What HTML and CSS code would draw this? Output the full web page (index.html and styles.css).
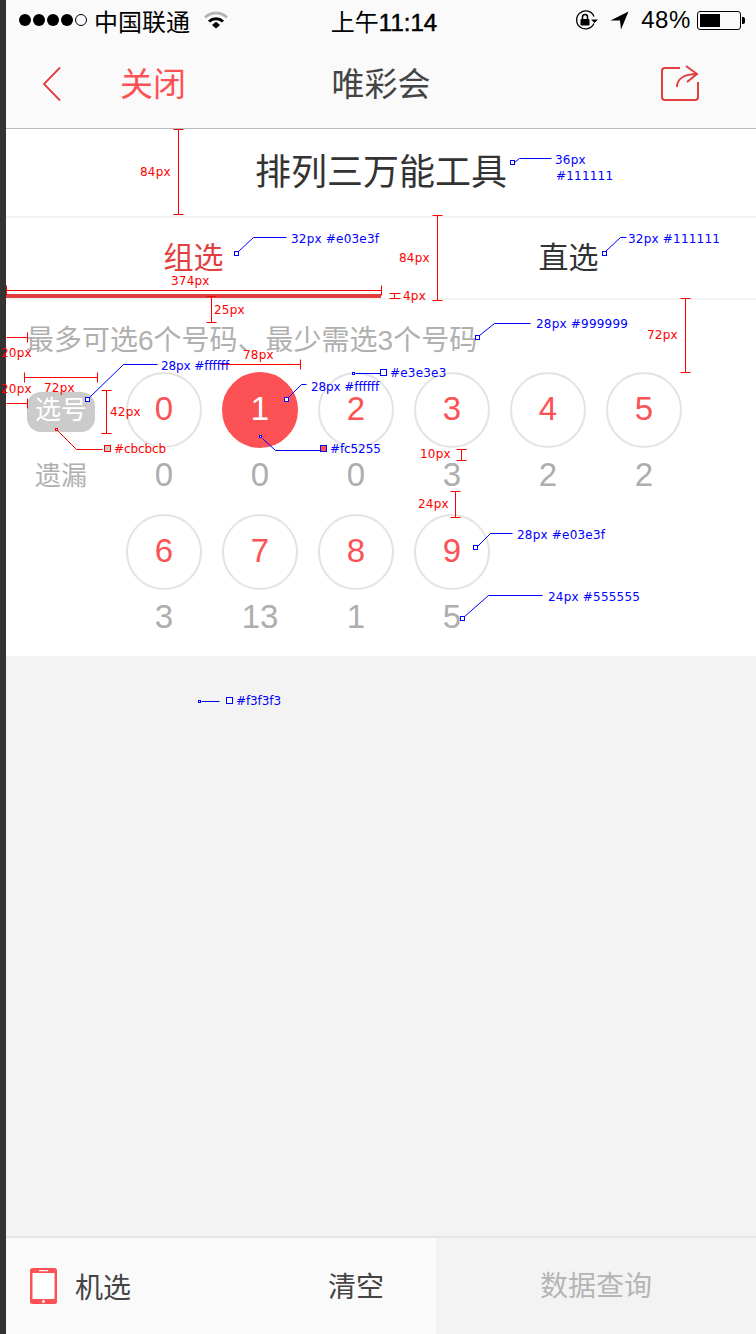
FILE: index.html
```html
<!DOCTYPE html>
<html lang="zh-CN">
<head>
    <meta charset="UTF-8">
    <meta name="viewport" content="width=device-width, initial-scale=1.0">
    <title>唯彩会</title>
    <link rel="stylesheet" href="styles.css">
</head>
<body>
    <div class="edge"></div>
    <div class="page">
        <div class="status-bar">
            <div class="status-left">
                <span class="signal">
                    <i class="dot"></i><i class="dot"></i><i class="dot"></i><i class="dot"></i><i class="dot empty"></i>
                </span>
                <span class="carrier">中国联通</span>
                <svg class="wifi" width="24" height="18" viewBox="0 0 24 18">
                    <path d="M1 6.500a16 16 0 0 1 22 0" fill="none" stroke="#b4b4b4" stroke-width="3"/>
                    <path d="M5 10.500a10.500 10.500 0 0 1 14 0" fill="none" stroke="#000" stroke-width="3"/>
                    <path d="M8 14l4-3.200 4 3.200-4 3.500z" fill="#000"/>
                </svg>
            </div>
            <div class="status-time">上午<span class="clock">11:14</span></div>
            <div class="status-right">
                <svg class="lock" width="24" height="20" viewBox="0 0 24 20">
                    <path d="M19 6.500A9 9 0 1 0 18.900 13.500" fill="none" stroke="#000" stroke-width="1.300"/>
                    <path d="M16 9.500h7l-3.500 3.500z" fill="#000"/>
                    <rect x="5.500" y="9" width="9" height="6.500" rx="1" fill="#000"/>
                    <path d="M7.500 9V7a2.500 2.500 0 0 1 5 0v2" fill="none" stroke="#000" stroke-width="1.500"/>
                </svg>
                <svg class="arrow" width="19" height="19" viewBox="0 0 19 19">
                    <path d="M0.500 9.500L18.500 0.500L11 18.500L10 9.500z" fill="#000"/>
                </svg>
                <span class="percent">48%</span>
                <span class="battery"><i class="battery-fill"></i></span>
                <i class="battery-nub"></i>
            </div>
        </div>

        <nav class="nav-bar">
            <div class="nav-left">
                <svg class="back" width="20" height="36" viewBox="0 0 20 36">
                    <path d="M18 1.500L2 18l16 16.500" fill="none" stroke="#e03e3f" stroke-width="1.800"/>
                </svg>
                <span class="close">关闭</span>
            </div>
            <div class="nav-title">唯彩会</div>
            <svg class="share" width="38" height="37" viewBox="0 0 38 37">
                <path d="M19 3H4a3 3 0 0 0-3 3v26a3 3 0 0 0 3 3h30a3 3 0 0 0 3-3V17" fill="none" stroke="#e03e3f" stroke-width="2"/>
                <path d="M16 22c0-8 7-13 20-13M25 1l11 8-10 8" fill="none" stroke="#e03e3f" stroke-width="2"/>
            </svg>
        </nav>

        <header class="tool-title">排列三万能工具</header>

        <div class="tabs">
            <div class="tab active">组选</div>
            <div class="tab">直选</div>
        </div>

        <section class="picker">
            <p class="hint">最多可选6个号码、最少需选3个号码</p>
            <div class="pick-area">
                <div class="pick-labels">
                    <span class="label-badge">选号</span>
                    <span class="label-miss">遗漏</span>
                </div>
                <div class="balls">
                    <div class="cell"><span class="ball">0</span><span class="count">0</span></div>
                    <div class="cell"><span class="ball selected">1</span><span class="count">0</span></div>
                    <div class="cell"><span class="ball">2</span><span class="count">0</span></div>
                    <div class="cell"><span class="ball">3</span><span class="count">3</span></div>
                    <div class="cell"><span class="ball">4</span><span class="count">2</span></div>
                    <div class="cell"><span class="ball">5</span><span class="count">2</span></div>
                    <div class="cell"><span class="ball">6</span><span class="count">3</span></div>
                    <div class="cell"><span class="ball">7</span><span class="count">13</span></div>
                    <div class="cell"><span class="ball">8</span><span class="count">1</span></div>
                    <div class="cell"><span class="ball">9</span><span class="count">5</span></div>
                </div>
            </div>
        </section>

        <div class="filler"></div>

        <footer class="bottom-bar">
            <div class="bottom-left">
                <div class="random">
                    <svg class="phone" width="27" height="36" viewBox="0 0 27 36">
                        <rect width="27" height="36" rx="2.500" fill="#fc5255"/>
                        <rect x="2.500" y="5" width="22" height="26" fill="#fff"/>
                        <rect x="9" y="2" width="9" height="1.200" fill="#fff"/>
                        <circle cx="13.500" cy="33.500" r="1.400" fill="#fff"/>
                    </svg>
                    <span>机选</span>
                </div>
                <span class="clear">清空</span>
            </div>
            <div class="bottom-right">数据查询</div>
        </footer>

        <!-- spec marks drawn on top of the design -->
        <svg class="marks" width="756" height="1334" viewBox="0 0 756 1334">
            <g class="red-lines">
                <path d="M178 129v85M173 129h10M173 214h10"/>
                <path d="M437 215v85M432 215h10M432 300h10"/>
                <path d="M6 290H381M6 285v10M381 285v10"/>
                <path d="M394 293v5M389 293h11M389 298h11"/>
                <path d="M211 296v26M206 296h10M206 322h10"/>
                <path d="M685 298v74M680 298h10M680 372h10"/>
                <path d="M6 337H27M27 332v10"/>
                <path d="M6 403H27M27 398v10"/>
                <path d="M24 377H97M24 372v10M97 372v10"/>
                <path d="M220 364H300M300 359v10"/>
                <path d="M106 390v43M101 390h10M101 433h10"/>
                <path d="M461 449v11M456 449h10M456 460h10"/>
                <path d="M455 491v26M450 491h10M450 517h10"/>
                <path d="M56 429l20 20h26"/>
            </g>
            <g class="red-text">
                <text x="140" y="176">84px</text>
                <text x="399" y="262">84px</text>
                <text x="171" y="285">374px</text>
                <text x="403" y="300">4px</text>
                <text x="214" y="314">25px</text>
                <text x="647" y="339">72px</text>
                <text x="1" y="357">20px</text>
                <text x="243" y="359">78px</text>
                <text x="1" y="393">20px</text>
                <text x="44" y="392">72px</text>
                <text x="110" y="416">42px</text>
                <text x="420" y="458">10px</text>
                <text x="418" y="508">24px</text>
                <text class="tight" x="114" y="453">#cbcbcb</text>
            </g>
            <g class="blue-lines">
                <path d="M514 162l5-4h32"/>
                <path d="M238 251l15-14h33"/>
                <path d="M605 251l15-14h6"/>
                <path d="M479 335l15-12h36"/>
                <path d="M89 397l34-33h34"/>
                <path d="M288 397l13-13h5"/>
                <path d="M355 373h26"/>
                <path d="M262 438l13 12h46"/>
                <path d="M477 546l13-13h22"/>
                <path d="M463 617l25-22h54"/>
                <path d="M201 701h18"/>
            </g>
            <g class="blue-boxes">
                <rect x="510.500" y="160.500" width="4" height="4"/>
                <rect x="234.500" y="251.500" width="4" height="4"/>
                <rect x="602.500" y="251.500" width="4" height="4"/>
                <rect x="475.500" y="335.500" width="4" height="4"/>
                <rect x="85.500" y="397.500" width="4" height="4"/>
                <rect x="284.500" y="397.500" width="4" height="4"/>
                <rect x="380.500" y="369.500" width="6" height="6"/>
                <rect x="352.500" y="372.500" width="2" height="2"/>
                <rect x="259.500" y="435.500" width="2" height="2"/>
                <rect x="473.500" y="545.500" width="4" height="4"/>
                <rect x="460.500" y="616.500" width="4" height="4"/>
                <rect x="226.500" y="697.500" width="6" height="6"/>
                <rect x="198.500" y="700.500" width="2" height="2"/>
                <rect class="box-red" x="320.500" y="445.500" width="6" height="6"/>
            </g>
            <rect class="box-grey" x="104.500" y="445.500" width="6" height="6"/>
            <rect class="box-tiny" x="55.500" y="428.500" width="2" height="2"/>
            <g class="blue-text">
                <text x="555" y="164">36px</text>
                <text x="556" y="180">#111111</text>
                <text x="291" y="243">32px #e03e3f</text>
                <text x="628" y="243">32px #111111</text>
                <text x="536" y="328">28px #999999</text>
                <text class="tight" x="161" y="370">28px #ffffff</text>
                <text class="tight" x="311" y="391">28px #ffffff</text>
                <text x="390" y="377">#e3e3e3</text>
                <text class="tight" x="330" y="453">#fc5255</text>
                <text x="517" y="539">28px #e03e3f</text>
                <text x="548" y="601">24px #555555</text>
                <text class="tight" x="236" y="705">#f3f3f3</text>
            </g>
        </svg>
    </div>
</body>
</html>
```

FILE: styles.css
```css
* {
    margin: 0;
    padding: 0;
    box-sizing: border-box;
}

body {
    display: flex;
    width: 756px;
    height: 1334px;
    overflow: hidden;
    background: #f3f3f3;
    font-family: "Liberation Sans", "Noto Sans CJK SC", sans-serif;
}

.edge {
    width: 6px;
    background: #333333;
}

.page {
    position: relative;
    display: flex;
    flex-direction: column;
    width: 750px;
}

/* status bar */
.status-bar {
    display: flex;
    justify-content: space-between;
    align-items: center;
    height: 40px;
    padding: 0 11px 0 13px;
    background: #fafafa;
    color: #000;
    font-size: 24px;
}

.status-left,
.status-right {
    display: flex;
    align-items: center;
    width: 260px;
}

.status-right {
    justify-content: flex-end;
}

.signal {
    display: flex;
    gap: 2px;
}

.dot {
    width: 12px;
    height: 12px;
    border-radius: 50%;
    background: #000;
}

.dot.empty {
    background: none;
    border: 1px solid #000;
}

.carrier {
    margin-left: 7px;
}

.wifi {
    margin-left: 14px;
}

.status-time {
    margin-left: 4px;
}

.clock {
    -webkit-text-stroke: 0.5px #000;
}

.arrow {
    margin-left: 11px;
}

.percent {
    margin-left: 12px;
    letter-spacing: 0.6px;
}

.battery {
    display: block;
    width: 44px;
    height: 19px;
    margin-left: 6px;
    padding: 2px;
    border: 1px solid #000;
    border-radius: 3px;
}

.battery-fill {
    display: block;
    width: 20px;
    height: 100%;
    background: #000;
}

.battery-nub {
    width: 3px;
    height: 7px;
    margin-left: 1px;
    background: #000;
    border-radius: 0 2px 2px 0;
}

/* nav */
.nav-bar {
    display: grid;
    grid-template-columns: 1fr auto 1fr;
    align-items: center;
    height: 89px;
    padding: 0 36px 1px;
    background: #fafafa;
    border-bottom: 1px solid #bbbbbb;
}

.nav-left {
    display: flex;
    align-items: center;
    gap: 58px;
}

.close {
    margin-top: -3px;
    color: #fc5255;
    font-size: 33px;
}

.nav-title {
    margin-top: -3px;
    color: #444444;
    font-size: 33px;
}

.share {
    justify-self: end;
    margin-right: 21px;
}

.tool-title {
    height: 89px;
    background: #fff;
    color: #333333;
    font-size: 36px;
    line-height: 88px;
    text-align: center;
    border-bottom: 2px solid #f3f3f3;
}

/* tabs */
.tabs {
    display: flex;
    height: 82px;
    background: #fff;
    border-bottom: 2px solid #f3f3f3;
}

.tab {
    width: 375px;
    height: 80px;
    padding-top: 18px;
    color: #333333;
    font-size: 30px;
    line-height: 44px;
    text-align: center;
}

.tab.active {
    color: #e03e3f;
    border-bottom: 4px solid #e03e3f;
}

/* number picker */
.picker {
    height: 356px;
    background: #fff;
}

.hint {
    height: 72px;
    padding: 21px 0 0 20px;
    color: #b0b0b0;
    font-size: 28px;
    line-height: 40px;
}

.pick-area {
    display: flex;
}

.pick-labels {
    display: flex;
    flex-direction: column;
    align-items: center;
    width: 120px;
    padding: 20px 31px 0 21px;
}

.label-badge {
    flex: none;
    width: 68px;
    height: 40px;
    background: #cbcbcb;
    border-radius: 14px;
    color: #fff;
    font-size: 26px;
    line-height: 36px;
    text-align: center;
}

.label-miss {
    margin-top: 26px;
    color: #b0b0b0;
    font-size: 26px;
    line-height: 36px;
    white-space: nowrap;
}

.balls {
    display: grid;
    grid-template-columns: repeat(6, 76px);
    column-gap: 20px;
    row-gap: 24px;
}

.cell {
    display: flex;
    flex-direction: column;
    align-items: center;
}

.ball {
    width: 76px;
    height: 76px;
    border: 2px solid #e3e3e3;
    border-radius: 50%;
    color: #fc5255;
    font-size: 33px;
    line-height: 70px;
    text-align: center;
}

.ball.selected {
    background: #fc5255;
    border-color: #fc5255;
    color: #fff;
}

.count {
    height: 32px;
    margin-top: 10px;
    color: #aeaeae;
    font-size: 33px;
    line-height: 34px;
}

.filler {
    flex: 1;
    background: #f3f3f3;
}

/* bottom bar */
.bottom-bar {
    display: flex;
    height: 98px;
    border-top: 2px solid #e6e6e6;
}

.bottom-left {
    display: flex;
    justify-content: space-between;
    align-items: center;
    width: 430px;
    padding: 0 52px 0 24px;
    background: #fafafa;
    color: #444444;
    font-size: 28px;
}

.random {
    display: flex;
    align-items: center;
    gap: 18px;
}

.clear {
    margin-top: -2px;
}

.bottom-right {
    flex: 1;
    background: #f3f3f3;
    color: #b5b5b5;
    font-size: 28px;
    line-height: 98px;
    text-align: center;
}

/* spec marks */
.marks {
    position: absolute;
    top: 0;
    left: -6px;
    font-family: "DejaVu Sans", sans-serif;
    font-size: 12px;
    letter-spacing: 0.2px;
}

.marks .tight {
    letter-spacing: -0.1px;
}

.red-lines,
.blue-lines {
    transform: translate(0.5px, 0.5px);
}

.red-lines path {
    fill: none;
    stroke: #ff0000;
}

.red-text text {
    fill: #ff0000;
}

.blue-lines path {
    fill: none;
    stroke: #0000ff;
}

.blue-boxes rect {
    fill: #fff;
    stroke: #0000ff;
}

.blue-boxes .box-red {
    fill: #fc5255;
}

.box-grey {
    fill: #cbcbcb;
    stroke: #ff0000;
}

.box-tiny {
    fill: #fff;
    stroke: #ff0000;
}

.blue-text text {
    fill: #0000ff;
}
```
